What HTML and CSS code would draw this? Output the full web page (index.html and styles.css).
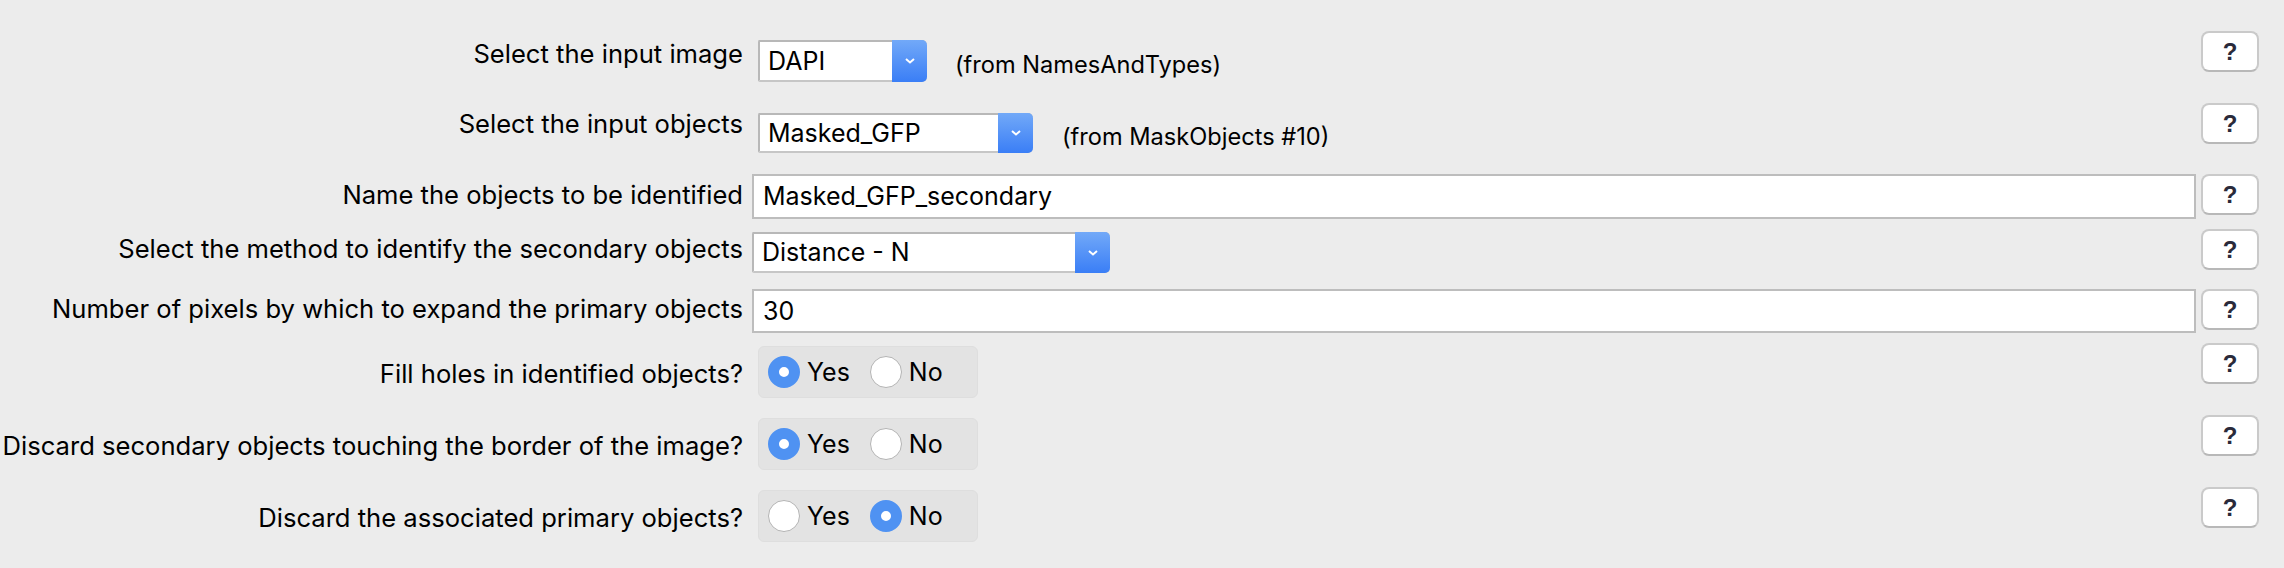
FILE: index.html
```html
<!DOCTYPE html>
<html>
<head>
<meta charset="utf-8">
<link rel="stylesheet" href="styles.css">
</head>
<body>
<div class="form">
  <div class="row r1">
    <div class="label">Select the input image</div>
    <div class="control">
      <div class="choice w1"><span class="val">DAPI</span><span class="arrow"><svg width="12" height="8" viewBox="0 0 12 8"><path d="M2 2 L6 5.5 L10 2" fill="none" stroke="#fff" stroke-width="2"/></svg></span></div>
      <span class="note">(from NamesAndTypes)</span>
    </div>
    <div class="help">?</div>
  </div>
  <div class="row r2">
    <div class="label">Select the input objects</div>
    <div class="control">
      <div class="choice w2"><span class="val">Masked_GFP</span><span class="arrow"><svg width="12" height="8" viewBox="0 0 12 8"><path d="M2 2 L6 5.5 L10 2" fill="none" stroke="#fff" stroke-width="2"/></svg></span></div>
      <span class="note">(from MaskObjects #10)</span>
    </div>
    <div class="help">?</div>
  </div>
  <div class="row r3">
    <div class="label">Name the objects to be identified</div>
    <div class="control">
      <div class="field h45">Masked_GFP_secondary</div>
    </div>
    <div class="help">?</div>
  </div>
  <div class="row r4">
    <div class="label">Select the method to identify the secondary objects</div>
    <div class="control">
      <div class="choice w4"><span class="val">Distance - N</span><span class="arrow"><svg width="12" height="8" viewBox="0 0 12 8"><path d="M2 2 L6 5.5 L10 2" fill="none" stroke="#fff" stroke-width="2"/></svg></span></div>
    </div>
    <div class="help">?</div>
  </div>
  <div class="row r5">
    <div class="label">Number of pixels by which to expand the primary objects</div>
    <div class="control">
      <div class="field h44">30</div>
    </div>
    <div class="help">?</div>
  </div>
  <div class="row r6">
    <div class="label">Fill holes in identified objects?</div>
    <div class="control">
      <div class="radios"><span class="radio on"></span><span class="opt">Yes</span><span class="radio"></span><span class="opt">No</span></div>
    </div>
    <div class="help">?</div>
  </div>
  <div class="row r7">
    <div class="label">Discard secondary objects touching the border of the image?</div>
    <div class="control">
      <div class="radios"><span class="radio on"></span><span class="opt">Yes</span><span class="radio"></span><span class="opt">No</span></div>
    </div>
    <div class="help">?</div>
  </div>
  <div class="row r8">
    <div class="label">Discard the associated primary objects?</div>
    <div class="control">
      <div class="radios"><span class="radio"></span><span class="opt">Yes</span><span class="radio on"></span><span class="opt">No</span></div>
    </div>
    <div class="help">?</div>
  </div>
</div>
</body>
</html>
```
FILE: styles.css
```css
html, body {
  margin: 0;
  padding: 0;
  background: #ececec;
  width: 2284px;
  height: 568px;
  overflow: hidden;
}
body {
  font-family: Inter, "Liberation Sans", sans-serif;
  font-size: 25px;
  color: #000;
}
.form {
  padding-top: 31px;
  display: flex;
  flex-direction: column;
}
.row {
  display: flex;
  align-items: flex-start;
}
.label {
  width: 743px;
  flex: none;
  text-align: right;
  font-size: 25.6px;
  line-height: 30px;
  white-space: nowrap;
}
.control {
  width: 1444px;
  margin-left: 9px;
  flex: none;
  display: flex;
  align-items: center;
}
.help {
  width: 58px;
  height: 41px;
  margin-left: 5px;
  flex: none;
  box-sizing: border-box;
  background: #fff;
  border: 2px solid #cacaca;
  border-bottom-color: #b8b8b8;
  border-radius: 8px;
  font-family: "Liberation Sans", sans-serif;
  font-weight: bold;
  font-size: 24px;
  line-height: 37px;
  text-align: center;
  color: #2a2a3a;
}
.choice {
  box-sizing: border-box;
  height: 42px;
  display: flex;
  background: #fff;
  border: 2px solid #b8b8b8;
  border-right: none;
  border-bottom-color: #c6c6c6;
  border-radius: 2px 5px 5px 2px;
}
.choice .val {
  flex: 1;
  padding-left: 8px;
  line-height: 38px;
  white-space: nowrap;
}
.choice .arrow {
  width: 35px;
  margin-top: -2px;
  margin-bottom: -2px;
  background: linear-gradient(#72a9f8, #3a7ef6);
  border-radius: 0 5px 5px 0;
  display: flex;
  align-items: center;
  justify-content: center;
}
.w1 { width: 169px; margin-left: 6px; }
.w2 { width: 275px; margin-left: 6px; height: 40px; }
.w2 .val { line-height: 36px; }
.w4 { width: 358px; height: 41px; }
.w4 .val { line-height: 37px; }
.note {
  margin-left: 28px;
  margin-top: 6px;
  font-size: 23.6px;
  white-space: nowrap;
}
.r2 .note { margin-left: 29px; }
.field {
  box-sizing: border-box;
  width: 1444px;
  background: #fff;
  border: 2px solid #bdbdbd;
  padding-left: 9px;
  white-space: nowrap;
}
.h45 { height: 45px; line-height: 41px; }
.h44 { height: 44px; line-height: 40px; }
.radios {
  box-sizing: border-box;
  width: 220px;
  height: 52px;
  margin-left: 6px;
  margin-top: 3px;
  background: #e3e3e3;
  border: 1px solid #dedede;
  border-radius: 6px;
  display: flex;
  align-items: center;
  padding-left: 9px;
}
.radio {
  box-sizing: border-box;
  width: 32px;
  height: 32px;
  border-radius: 50%;
  background: #fff;
  border: 1px solid #b4b4b4;
  flex: none;
}
.radio.on {
  border: 11px solid #4f92f2;
  background: #fff;
}
.opt {
  margin-left: 7px;
  margin-right: 20px;
}
/* rows */
.r1 .label { margin-top: 8px; }
.r1 .control { margin-top: 9px; }
.r2 { margin-top: 21px; }
.r2 .label { margin-top: 6px; }
.r2 .control { margin-top: 10px; }
.r3 { margin-top: 21px; }
.r3 .label { margin-top: 6px; }
.r4 { margin-top: 10px; }
.r4 .label { margin-top: 5px; }
.r4 .control { margin-top: 3px; }
.r5 { margin-top: 16px; }
.r5 .label { margin-top: 5px; }
.r6 { margin-top: 10px; }
.r6 .label, .r7 .label, .r8 .label { margin-top: 16px; }
.r7 { margin-top: 17px; }
.r8 { margin-top: 17px; }
```
